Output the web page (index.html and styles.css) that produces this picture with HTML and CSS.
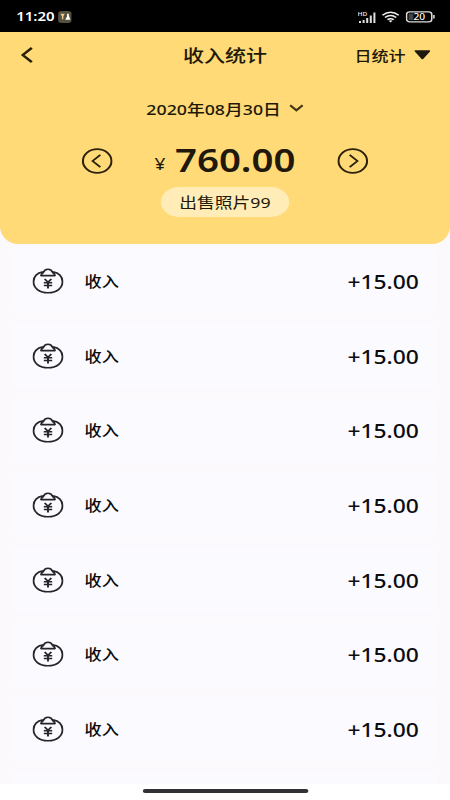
FILE: index.html
```html
<!DOCTYPE html>
<html lang="zh-CN">
<head>
<meta charset="utf-8">
<title>收入统计</title>
<link rel="stylesheet" href="styles.css">
</head>
<body>
<svg class="defs" width="0" height="0">
  <symbol id="purse" viewBox="0 0 26 26">
    <g fill="none" stroke="#25252b" stroke-width="1.6" stroke-linejoin="round">
      <path d="M8.800 3.700C3.800 4.700.9 8.900.9 13.600 .9 20.100 5.600 24.800 13 24.800s12.100-4.700 12.100-11.200c0-4.700-2.900-8.900-7.900-9.900"/>
      <path d="M7.200 7.600h11.600c-.1-1.700-.9-2.700-2-3.200C16.300 2.400 15 1.200 13 1.200S9.700 2.400 9.200 4.400C8.100 4.900 7.300 5.900 7.200 7.600z"/>
      <path d="M10.200 11l2.800 3.300 2.800-3.300M9.500 14.800h7M9.500 17.500h7M13 14v6.500"/>
    </g>
  </symbol>
</svg>
<div class="screen">
  <div class="status">
    <span class="clock">11:20</span>
    <svg class="notice" width="12" height="12" viewBox="0 0 12 13"><rect width="12" height="13" rx="3" fill="#56503f"/><path d="M2 3h4L4.700 6v3H3.400V6z" fill="#e5c68f"/><path d="M8 3h1.600v2L11 9.500H6.300L8 6z" fill="#fff"/></svg>
    <svg class="signal" width="16" height="13" viewBox="0 0 16 13"><text x="0" y="4.600" class="hd">HD</text><path d="M2 12v-2M5 12V9M8 12V7M11 12V4.500M14 12V1.500" stroke="#ddd" stroke-width="1.700"/></svg>
    <svg class="wifi" width="15" height="12" viewBox="0 0 15 12"><g fill="none" stroke="#eee" stroke-width="1.500"><path d="M.7 4.200q6.800-6 13.600 0M2.800 6.500q4.700-4 9.400 0M4.900 8.700q2.600-2 5.200 0"/></g><path d="M5.900 9.700q1.600-1 3.200 0L7.500 11.600z" fill="#eee"/></svg>
    <svg class="battery" width="25" height="12" viewBox="0 0 25 12"><rect x=".8" y=".8" width="21" height="10" rx="2.600" fill="none" stroke="#ddd" stroke-width="1.300"/><rect x="2.500" y="2.500" width="4" height="6.600" fill="#444"/><path d="M23.600 4v3.600" stroke="#ddd" stroke-width="1.300"/><text x="11.400" y="9" class="level">20</text></svg>
  </div>
  <header class="summary">
    <div class="nav">
      <svg class="back" width="11" height="18" viewBox="0 0 11 18"><path d="M9.500 1.800L2 9l7.500 7.200" fill="none" stroke="#2b210b" stroke-width="2.300"/></svg>
      <h1>收入统计</h1>
      <div class="mode">日统计<svg width="14" height="10" viewBox="0 0 14 10"><path d="M1.300 1h11.400L7 8.500z" fill="#20190d" stroke="#20190d" stroke-width="1.600" stroke-linejoin="round"/></svg></div>
    </div>
    <div class="date"><span>2020年08月30日</span><svg width="12" height="8" viewBox="0 0 12 8"><path d="M.8 1.200L6 6.300l5.200-5.100" fill="none" stroke="#463715" stroke-width="1.900"/></svg></div>
    <div class="total">
      <svg width="26" height="26" viewBox="0 0 26 26"><g fill="none" stroke="#2b210b" stroke-width="1.700"><circle cx="13" cy="13" r="11.900"/><path d="M15.600 6.800L9.200 13l6.400 6.200"/></g></svg>
      <div class="sum"><span class="yen">¥</span><strong>760.00</strong></div>
      <svg width="26" height="26" viewBox="0 0 26 26"><g fill="none" stroke="#2b210b" stroke-width="1.700"><circle cx="13" cy="13" r="11.900"/><path d="M10.400 6.800l6.400 6.200-6.400 6.200"/></g></svg>
    </div>
    <div class="sold">出售照片99</div>
  </header>
  <main class="list">
    <div class="row"><svg><use href="#purse"/></svg><span>收入</span><b>+15.00</b></div>
    <div class="row"><svg><use href="#purse"/></svg><span>收入</span><b>+15.00</b></div>
    <div class="row"><svg><use href="#purse"/></svg><span>收入</span><b>+15.00</b></div>
    <div class="row"><svg><use href="#purse"/></svg><span>收入</span><b>+15.00</b></div>
    <div class="row"><svg><use href="#purse"/></svg><span>收入</span><b>+15.00</b></div>
    <div class="row"><svg><use href="#purse"/></svg><span>收入</span><b>+15.00</b></div>
    <div class="row"><svg><use href="#purse"/></svg><span>收入</span><b>+15.00</b></div>
    <div class="row"></div>
  </main>
  <footer class="home"><i></i></footer>
</div>
</body>
</html>
```
FILE: styles.css
```css
* { box-sizing: border-box; margin: 0; }
html, body { width: 450px; height: 800px; overflow: hidden; background: #fff; }
.defs { display: block; position: absolute; }
svg { display: block; flex: none; }

/* 375-unit wide layout stretched to the device width */
.screen {
  width: 375px;
  height: 800px;
  display: flex;
  flex-direction: column;
  transform: scaleX(1.2);
  transform-origin: 0 0;
  background: #fcf9fd;
  color: #0c0c10;
  font-family: "Noto Sans", "Noto Sans CJK SC", sans-serif;
}
.status {
  height: 32px;
  flex: none;
  display: flex;
  align-items: center;
  padding: 2px 12px 0 13.5px;
  background: #000;
  color: #fff;
}
.clock { font-size: 12.5px; font-weight: 600; line-height: 16px; width: 34.5px; }
.signal { margin-left: auto; }
.wifi { margin-left: 4px; }
.battery { margin-left: 5.5px; }
.hd { font-size: 5.5px; font-weight: 600; fill: #ddd; }
.level { font-size: 8.5px; font-weight: 500; fill: #fff; text-anchor: middle; }

.summary {
  height: 212px;
  flex: none;
  background: #ffda76;
  border-radius: 0 0 15px 15px / 0 0 18px 18px;
  color: #20180a;
}
.nav {
  height: 46px;
  display: grid;
  grid-template-columns: 1fr auto 1fr;
  align-items: center;
  padding: 0 16px 0 17px;
}
h1 { font-size: 17.5px; font-weight: 500; line-height: 24px; margin-left: -1px; }
.mode {
  justify-self: end;
  display: flex;
  align-items: center;
  gap: 7px;
  font-size: 14.2px;
  font-weight: 500;
}
.date {
  height: 22px;
  margin-top: 19px;
  display: flex;
  align-items: center;
  justify-content: center;
  gap: 7px;
  font-size: 14.8px;
  font-weight: 500;
}
.total {
  height: 40px;
  margin: 22px 68px 0;
  display: flex;
  align-items: center;
  justify-content: space-between;
}
.sum { display: flex; align-items: baseline; line-height: 40px; padding-top: 6px; }
.yen { font-size: 16px; width: 17px; padding-bottom: 2px; margin-top: 0; transform: translateY(-2px); }
.sum strong { font-size: 32px; font-weight: 600; }
.sold {
  width: 107px;
  height: 30px;
  margin: 6px auto 0;
  border-radius: 15px;
  background: #ffecb6;
  font-size: 14.8px;
  line-height: 30px;
  text-align: center;
}

.list {
  height: 540px;
  flex: none;
  overflow: hidden;
  padding: 5px 11.5px 0;
  display: flex;
  flex-direction: column;
  gap: 10.7px;
}
.row {
  height: 64px;
  flex: none;
  display: flex;
  align-items: center;
  padding: 0 14.5px 0 15.5px;
  background: #fbfbff;
  border-radius: 4px;
}
.row svg { width: 26px; height: 26px; }
.row span { margin-left: 17.5px; padding-bottom: 1px; font-size: 14.3px; font-weight: 500; }
.row b { margin-left: auto; padding-top: 2px; font-size: 19px; font-weight: 500; }

.home { flex: 1; display: flex; justify-content: center; padding-top: 5px; background: #fff; }
.home i { width: 138px; height: 4px; border-radius: 2px; background: #323236; }
```
